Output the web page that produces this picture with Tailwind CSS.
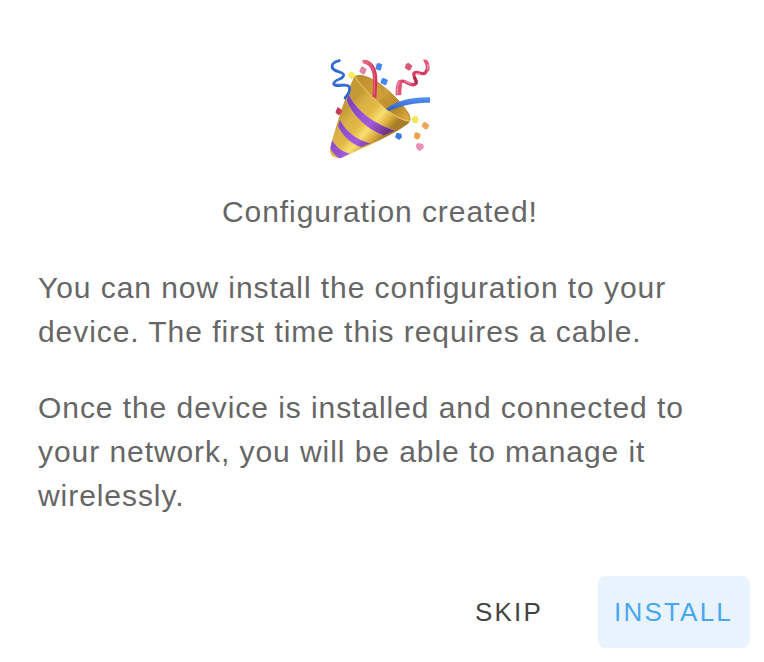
<!DOCTYPE html>
<html lang="en">
<head>
<meta charset="utf-8">
<title>Configuration created</title>
<script src="https://cdn.jsdelivr.net/npm/@tailwindcss/browser@4"></script>
</head>
<body class="bg-white">
<main class="flex h-[662px] w-[764px] flex-col overflow-hidden bg-white pt-[50px] font-['Liberation_Sans',Arial,sans-serif] text-[30px] leading-[44px] tracking-[0.9375px] text-[#666]">
  <svg class="ml-[320px] size-[120px] shrink-0" viewBox="0 0 360 360" fill="none" role="img" aria-label="Party popper">
    <defs>
      <linearGradient id="gold" gradientUnits="userSpaceOnUse" x1="72" y1="180" x2="178" y2="275">
        <stop stop-color="#c39a35"/><stop offset=".2" stop-color="#d9b044"/><stop offset=".45" stop-color="#e2b944"/><stop offset=".65" stop-color="#f8e070"/><stop offset=".84" stop-color="#dcae3c"/><stop offset="1" stop-color="#a87c28"/>
      </linearGradient>
      <linearGradient id="inside" gradientUnits="userSpaceOnUse" x1="120" y1="90" x2="260" y2="210">
        <stop stop-color="#c0902f"/><stop offset=".4" stop-color="#d0a13a"/><stop offset=".75" stop-color="#b5862a"/><stop offset="1" stop-color="#dcae42"/>
      </linearGradient>
      <linearGradient id="purple" gradientUnits="userSpaceOnUse" x1="65" y1="190" x2="180" y2="275">
        <stop stop-color="#8043bd"/><stop offset=".6" stop-color="#a45bdc"/><stop offset="1" stop-color="#6d3388"/>
      </linearGradient>
      <linearGradient id="blue" x1="0" y1="0" x2="0" y2="1"><stop stop-color="#5791f2"/><stop offset="1" stop-color="#2b5cc8"/></linearGradient>
      <linearGradient id="red" x1="0" y1="0" x2="1" y2="0"><stop stop-color="#ef7993"/><stop offset="1" stop-color="#cf2f53"/></linearGradient>
      <clipPath id="cone"><path d="M104 78C84 116 48 224 31 294C27 314 40 326 62 325C105 305 220 256 262 223C279 207 270 192 253 174C215 125 150 72 115 75Z"/></clipPath>
    </defs>
    <g clip-path="url(#cone)">
      <path d="M20 60H290V340H20Z" fill="url(#gold)"/>
      <path d="M86 130C104 176 158 221 226 241L190 257C138 236 96 194 80 154Z" fill="url(#purple)"/>
      <path d="M60 208C77 244 111 271 152 279L123 292C91 281 67 256 54 230Z" fill="url(#purple)"/>
      <path d="M36 267C46 289 64 304 92 311L60 327C44 317 33 304 28 286Z" fill="url(#purple)"/>
      <path d="M86 130C104 176 158 221 226 241M80 154C96 194 138 236 190 257M60 208C77 244 111 271 152 279M54 230C67 256 91 281 123 292M36 267C46 289 64 304 92 311" stroke="#f6dc83" stroke-width="1.5" opacity=".7"/>
    </g>
    <path d="M108 79C134 68 192 102 240 157C261 181 273 203 269 212C256 218 205 190 160 144C126 109 104 86 108 79Z" fill="url(#inside)"/>
    <path d="M108 79C104 86 126 109 160 144C205 190 256 218 269 212" stroke="#f5d877" stroke-width="2.5"/>
    <path d="M108 79C134 68 192 102 240 157C261 181 273 203 269 212" stroke="#b88a2b" stroke-width="3"/>
    <path d="M182 110L190 119L184 126M180 153L192 150L200 162" stroke="#a8802d" stroke-width="6" opacity=".35"/>
    <path d="M127 30C152 26 173 50 172 92L169 145L157 141C160 113 162 78 153 58C148 46 138 42 132 42Q124 36 127 30Z" fill="url(#red)"/>
    <path d="M132 34C153 34 164 57 164 91L162 133" stroke="#ea6080" stroke-width="3"/>
    <path d="M198 177C230 152 274 141 330 142V158C284 158 246 165 207 183Z" fill="url(#blue)"/>
    <path d="M58 32C41 35 34 43 37 54C42 67 70 64 71 75C72 88 41 88 41 101C43 115 82 97 88 111C91 120 84 134 75 144" stroke="#2c64d2" stroke-width="8" stroke-linecap="round" stroke-linejoin="round"/>
    <path d="M55 31C42 36 36 43 40 51C47 62 69 63 70 73C69 84 44 89 43 99C51 108 80 95 87 111" stroke="#4a80e2" stroke-width="2.5" stroke-linecap="round"/>
    <path d="M235 130C233 109 235 97 244 94C256 90 266 106 281 104C301 100 274 76 283 69C293 61 307 79 317 67C324 58 325 42 316 33" stroke="#d93b62" stroke-width="10"/>
    <path d="M227 136C226 106 231 90 241 89C251 91 244 106 244 135ZM310 29C324 24 331 42 328 64L318 62C320 46 316 36 310 33Z" fill="#e25478"/>
    <path d="M232 132C231 109 234 98 240 96M253 93L274 102M288 71L302 73M323 41L323 59" stroke="#f29bb0" stroke-width="3.5"/>
    <path d="M281 81Q291 91 288 101" stroke="#a82b4c" stroke-width="8"/>
    <path d="M176 39L187 43L183 59L179 62L166 57L170 41ZM190 83L204 90L200 103L195 106L181 99L185 86Z" fill="#4788f0"/>
    <path d="M94 64L106 73L102 83L95 88L84 79L87 69Z" fill="#f5eb5c"/>
    <path d="M128 49L140 58L136 69L130 74L118 65L122 53Z" fill="#e484a5"/>
    <path d="M265 38L277 47L273 58L266 62L254 53L258 42Z" fill="#db5878"/>
    <path d="M53 171L66 180L63 191L55 196L46 187Z" fill="#c83a5c"/>
    <path d="M280 198L292 199L297 210L291 220L279 219L274 208Z" fill="#f2e857"/>
    <path d="M315 215L328 225L324 235L317 239L305 229L309 218Z" fill="#f0a554"/>
    <path d="M288 246L302 252L299 264L293 269L282 263L283 251Z" fill="#eda14e"/>
    <path d="M230 248L244 251L246 262L237 270L225 262Z" fill="#3d7ae1"/>
    <path d="M293 279L309 282L312 292L301 303L292 300L287 286Z" fill="#ea90b8"/>
  </svg>
  <div class="mt-5 h-11 shrink-0 pl-[222px] whitespace-nowrap">Configuration created!</div>
  <p class="mt-8 shrink-0 pl-[38px] whitespace-nowrap">You can now install the configuration to your<br>device. The first time this requires a cable.</p>
  <p class="mt-8 shrink-0 pl-[38px] whitespace-nowrap">Once the device is installed and connected to<br>your network, you will be able to manage it<br>wirelessly.</p>
  <div class="mt-[58px] flex h-[72px] shrink-0 justify-end gap-[38px] pr-[14px] text-[26px] leading-[72px] tracking-[2.2px]">
    <button type="button" class="w-[102px] rounded-lg pl-[17px] text-left text-[#444]">SKIP</button>
    <button type="button" class="w-[152px] rounded-lg bg-[#e9f3fd] pl-4 text-left text-[#49a7ee]">INSTALL</button>
  </div>
</main>
</body>
</html>
